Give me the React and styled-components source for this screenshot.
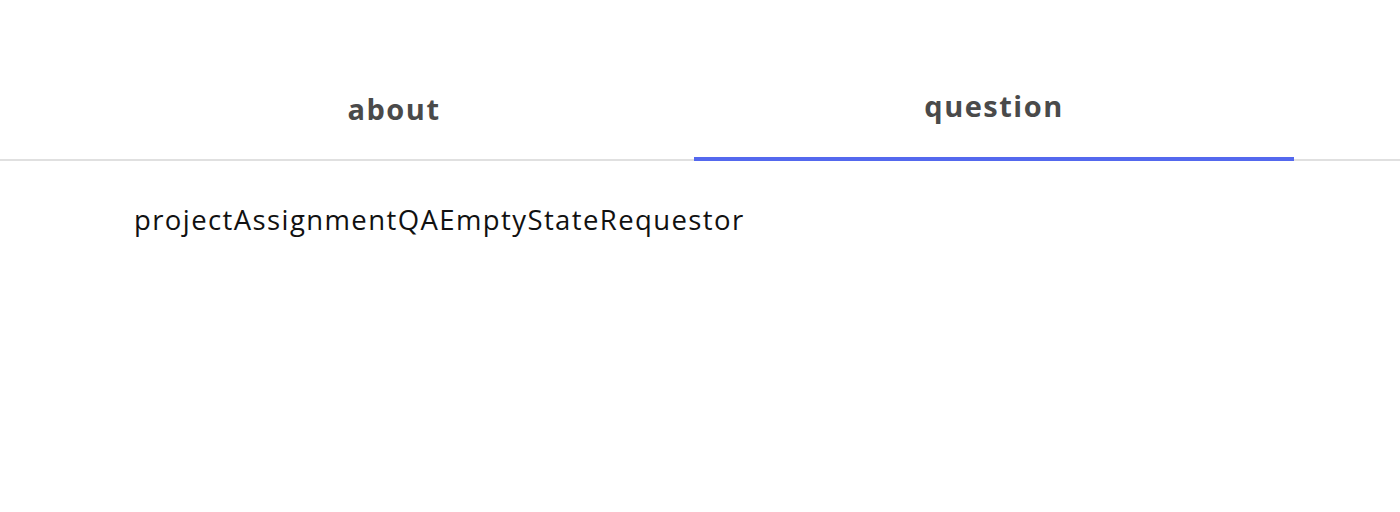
import React, { useState } from "react";
import styled, { createGlobalStyle } from "styled-components";

const Global = createGlobalStyle`
  html, body { margin: 0; padding: 0; background: #fff; }
  body { font-family: "Open Sans", Lato, sans-serif; }
`;

const Page = styled.div`
  width: 1400px;
  padding-top: 63px;
`;

const TabBar = styled.div`
  display: flex;
  padding: 0 106px 0 94px;
  border-bottom: 2px solid #e0e0e0;
`;

const Tab = styled.button`
  flex: 0 0 600px;
  height: 98px;
  border: none;
  background: none;
  padding: 0 0 ${(p) => (p.$active ? "10px" : "4px")};
  margin-bottom: -2px;
  font-family: "Open Sans", Lato, sans-serif;
  font-weight: 700;
  font-size: 29px;
  letter-spacing: 1.5px;
  color: #4a4a4a;
  cursor: pointer;
  border-bottom: 4px solid ${(p) => (p.$active ? "#5468ee" : "transparent")};
  box-sizing: border-box;
  display: flex;
  align-items: center;
  justify-content: center;
`;

const Content = styled.div`
  padding: 40px 134px;
  font-family: "Open Sans", Lato, sans-serif;
  font-size: 27.5px;
  letter-spacing: 1.4px;
  color: #111;
`;

export default function App() {
  const [tab, setTab] = useState("question");
  return (
    <Page>
      <Global />
      <TabBar>
        <Tab $active={tab === "about"} onClick={() => setTab("about")}>about</Tab>
        <Tab $active={tab === "question"} onClick={() => setTab("question")}>question</Tab>
      </TabBar>
      <Content>projectAssignmentQAEmptyStateRequestor</Content>
    </Page>
  );
}
